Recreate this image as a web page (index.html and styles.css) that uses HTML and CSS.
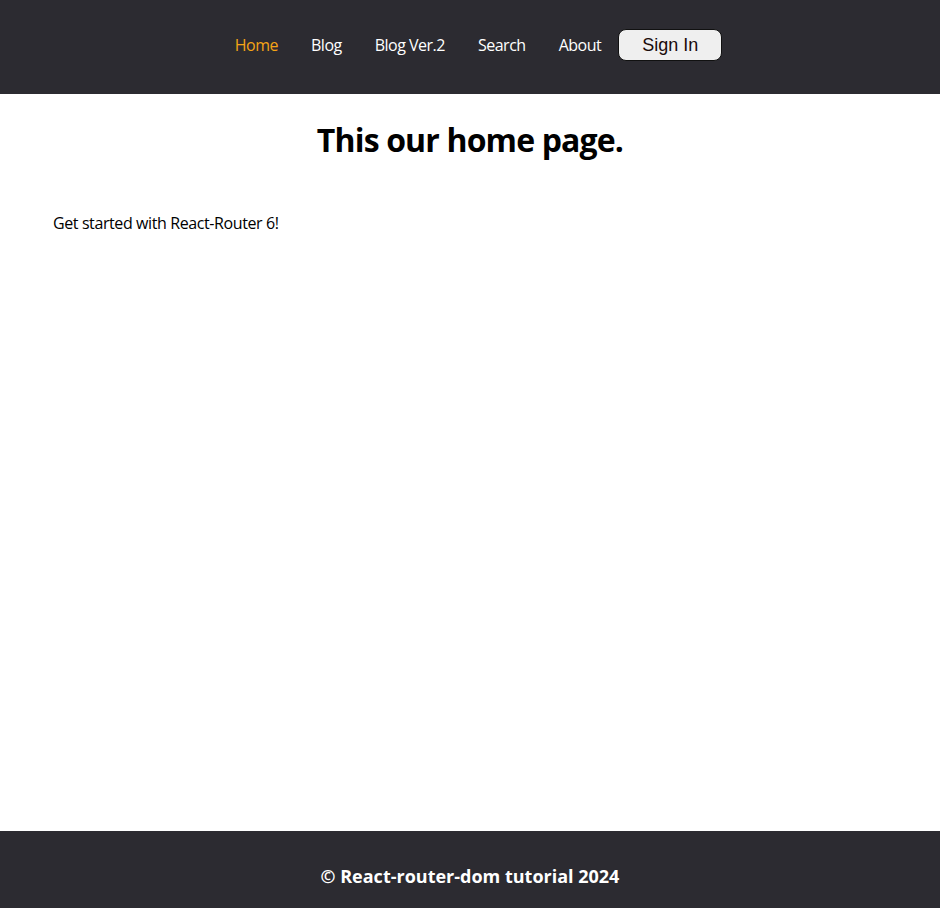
FILE: index.html
```html
<!DOCTYPE html>
<html lang="en">
<head>
<meta charset="utf-8">
<title>React Router Tutorial</title>
<link rel="stylesheet" href="styles.css">
</head>
<body>
<div class="page">
  <header class="header">
    <nav class="nav">
      <a class="nav-link active" href="#">Home</a>
      <a class="nav-link" href="#">Blog</a>
      <a class="nav-link" href="#">Blog Ver.2</a>
      <a class="nav-link" href="#">Search</a>
      <a class="nav-link" href="#">About</a>
      <button class="signin" type="button">Sign In</button>
    </nav>
  </header>
  <main class="main">
    <h1 class="title">This our home page.</h1>
    <p class="intro">Get started with React-Router 6!</p>
  </main>
  <footer class="footer">
    <p class="footer-text">© React-router-dom tutorial 2024</p>
  </footer>
</div>
</body>
</html>
```
FILE: styles.css
```css
* { box-sizing: border-box; }
html, body { margin: 0; padding: 0; }
body {
  font-family: "Open Sans", "Noto Sans", sans-serif;
  color: #000;
  background: #fff;
}
.page {
  min-height: 100vh;
  display: flex;
  flex-direction: column;
}
.header {
  background: #2c2b31;
  height: 94px;
  display: flex;
  align-items: center;
  justify-content: center;
  padding: 0 0 4px 17px;
}
.nav {
  display: flex;
  align-items: center;
  gap: 33px;
}
.nav-link {
  color: #ffffff;
  text-decoration: none;
  font-size: 16px;
  letter-spacing: -0.5px;
}
.nav-link.active { color: #f5a416; }
.signin {
  margin-left: -16px;
  width: 104px;
  height: 32px;
  background: #efefef;
  border: 1px solid #111;
  border-radius: 8px;
  font-family: "Liberation Sans", Arial, sans-serif;
  font-size: 18px;
  color: #1a0a0a;
  padding: 0;
}
.main {
  flex: 1;
  padding: 0 53px;
}
.title {
  text-align: center;
  font-size: 32px;
  font-weight: 700;
  letter-spacing: -0.85px;
  margin: 24px 0 0;
}
.intro {
  font-size: 16px;
  letter-spacing: -0.4px;
  margin: 51px 0 0;
}
.footer {
  background: #2c2b31;
  height: 77px;
  display: flex;
  align-items: center;
  justify-content: center;
  padding-top: 12px;
}
.footer-text {
  margin: 0;
  color: #fff;
  font-weight: 700;
  font-size: 18px;
}
```
